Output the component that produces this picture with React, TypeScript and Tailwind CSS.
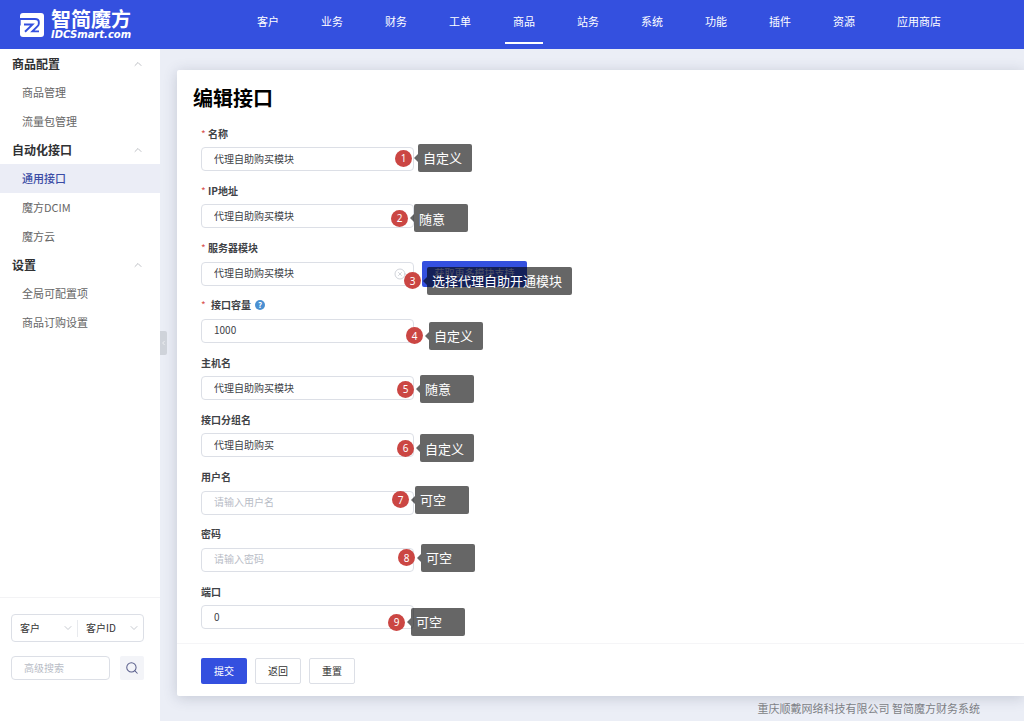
import { ChevronDown, ChevronLeft, ChevronUp, CircleX, Search } from "lucide-react";

const navItems = ["客户", "业务", "财务", "工单", "商品", "站务", "系统", "功能", "插件", "资源", "应用商店"];

const menuGroups = [
  { title: "商品配置", items: ["商品管理", "流量包管理"] },
  { title: "自动化接口", items: ["通用接口", "魔方DCIM", "魔方云"] },
  { title: "设置", items: ["全局可配置项", "商品订购设置"] },
];

type Field = {
  id: string;
  label: string;
  value?: string;
  placeholder?: string;
  type?: string;
  required?: boolean;
  help?: boolean;
  moreModules?: boolean;
  note: string;
  notePosition: string;
};

const fields: Field[] = [
  { id: "name", label: "名称", value: "代理自助购买模块", required: true, note: "自定义", notePosition: "left-[194px] -top-[3px]" },
  { id: "ip", label: "IP地址", value: "代理自助购买模块", required: true, note: "随意", notePosition: "left-[190px] top-0" },
  { id: "module", label: "服务器模块", value: "代理自助购买模块", required: true, moreModules: true, note: "选择代理自助开通模块", notePosition: "left-[203px] top-[5px]" },
  { id: "capacity", label: "接口容量", value: "1000", required: true, help: true, note: "自定义", notePosition: "left-[205px] top-[3px]" },
  { id: "host", label: "主机名", value: "代理自助购买模块", note: "随意", notePosition: "left-[196px] -top-px" },
  { id: "group", label: "接口分组名", value: "代理自助购买", note: "自定义", notePosition: "left-[196px] top-px" },
  { id: "user", label: "用户名", placeholder: "请输入用户名", note: "可空", notePosition: "left-[191px] -top-[5px]" },
  { id: "password", label: "密码", placeholder: "请输入密码", type: "password", note: "可空", notePosition: "left-[197px] -top-1" },
  { id: "port", label: "端口", value: "0", note: "可空", notePosition: "left-[187px] top-[3px]" },
];

function Logo() {
  return (
    <a href="#" className="flex items-center gap-[7px] text-white">
      <svg viewBox="0 0 24 24" className="size-6" aria-hidden="true">
        <rect width="24" height="24" rx="3" fill="currentColor" />
        <path d="M0 6H15Q18.8 6 18.8 9V10.4Q18.8 12 17.6 13.2L12.4 18.4H19" fill="none" stroke="#3450df" strokeWidth="1.9" />
        <path d="M4 11.6H12.4L5 18.8" fill="none" stroke="#3450df" strokeWidth="2" />
        <path d="M0 6V12.4" stroke="#3450df" strokeWidth="1.4" />
      </svg>
      <span className="flex flex-col">
        <span className="text-[20px] leading-5 font-bold">智简魔方</span>
        <span className="font-['DejaVu_Sans',sans-serif] text-[10px] leading-3 font-bold italic">IDCSmart.com</span>
      </span>
    </a>
  );
}

function Header() {
  return (
    <header className="flex h-[49px] shrink-0 bg-[#3450df] pl-5">
      <div className="flex w-[229px] shrink-0 items-center">
        <Logo />
      </div>
      <nav className="flex gap-[26px] text-[11px] text-white">
        {navItems.map((item) => (
          <a
            key={item}
            href="#"
            className={
              item === "商品"
                ? "flex h-11 items-center border-b-2 border-white px-2 whitespace-nowrap"
                : "flex h-11 items-center border-b-2 border-transparent px-2 whitespace-nowrap"
            }
          >
            {item}
          </a>
        ))}
      </nav>
    </header>
  );
}

function Sidebar() {
  return (
    <aside className="relative flex w-40 shrink-0 flex-col bg-white text-[11px]">
      <nav className="pt-px">
        {menuGroups.map((group) => (
          <section key={group.title}>
            <button type="button" className="flex h-7 w-full items-center justify-between pr-4 pl-3 text-[12px] font-bold text-[#303133]">
              {group.title}
              <ChevronUp className="size-3 text-[#a8abb2]" strokeWidth={1.5} />
            </button>
            {group.items.map((item) => (
              <a
                key={item}
                href="#"
                className={
                  item === "通用接口"
                    ? "flex h-[29px] items-center bg-[#ebedf6] pl-[22px] font-medium text-[#3a4ba5]"
                    : "flex h-[29px] items-center pl-[22px] text-[#666666]"
                }
              >
                {item}
              </a>
            ))}
          </section>
        ))}
      </nav>
      <form className="mt-auto flex flex-col gap-3.5 border-t border-[#f3f3f5] pt-4 pr-4 pb-[41px] pl-[11px] text-[10px] text-[#333333]">
        <div className="flex h-7 items-center rounded-sm border border-[#dcdfe6]">
          <div className="relative flex w-[66px] items-center border-r border-[#e8eaee]">
            <select aria-label="搜索类型" className="w-full appearance-none bg-transparent pb-0.5 pl-2 outline-none">
              <option>客户</option>
            </select>
            <ChevronDown className="pointer-events-none absolute right-[3px] size-3 text-[#b4b8c0]" strokeWidth={1.5} />
          </div>
          <div className="relative flex flex-1 items-center">
            <select aria-label="搜索字段" className="w-full appearance-none bg-transparent pb-0.5 pl-2 outline-none">
              <option>客户ID</option>
            </select>
            <ChevronDown className="pointer-events-none absolute right-[3px] size-3 text-[#b4b8c0]" strokeWidth={1.5} />
          </div>
        </div>
        <div className="flex gap-2.5">
          <input
            type="text"
            aria-label="高级搜索"
            placeholder="高级搜索"
            className="h-6 min-w-0 flex-1 rounded-sm border border-[#dcdfe6] px-3 pb-0.5 outline-none placeholder:text-[#b8bcc6]"
          />
          <button type="button" aria-label="搜索" className="flex size-6 items-center justify-center rounded-xs bg-[#f3f4f8] text-[#5a5f8c]">
            <Search className="size-3.5" strokeWidth={1.75} />
          </button>
        </div>
      </form>
      <button
        type="button"
        aria-label="收起菜单"
        className="absolute top-[282px] left-full flex h-6 w-[7px] items-center justify-center rounded-r-xs bg-[#cfd3da] text-white"
      >
        <ChevronLeft className="size-2" strokeWidth={2} />
      </button>
    </aside>
  );
}

function Note({ index, text, position }: { index: number; text: string; position: string }) {
  return (
    <div className={`absolute z-10 flex items-center ${position}`}>
      <span className="flex size-[17px] items-center justify-center rounded-full bg-[#cb4643] font-['Noto_Sans',sans-serif] text-[10px] leading-none text-white">
        {index}
      </span>
      <svg viewBox="0 0 4 8" className="ml-0.5 h-2 w-1" aria-hidden="true">
        <path d="M4 0V8L0 4Z" fill="#000000" fillOpacity="0.6" />
      </svg>
      <span className="flex h-7 min-w-[54px] items-center rounded-xs bg-black/60 pr-2.5 pl-[5px] text-[13px] whitespace-nowrap text-white">
        {text}
      </span>
    </div>
  );
}

function FormField({ field, index }: { field: Field; index: number }) {
  return (
    <div className="flex flex-col gap-[3px]">
      <div className="flex h-5 items-center gap-1 pb-0.5">
        <label htmlFor={field.id} className="flex items-center font-bold text-[#404246]">
          {field.required && <span className="w-[7px] font-normal text-[#d9534f]">*</span>}
          <span className={field.help ? "pl-[3px]" : ""}>{field.label}</span>
        </label>
        {field.help && (
          <span className="flex size-2.5 items-center justify-center rounded-full bg-[#4a90d2] text-[8px] leading-none font-bold text-white">?</span>
        )}
      </div>
      <div className="relative flex gap-2">
        <div className="relative flex w-[213px] items-center">
          <input
            id={field.id}
            type={field.type ?? "text"}
            defaultValue={field.value}
            placeholder={field.placeholder}
            className="h-6 w-full rounded-sm border border-[#dcdfe6] bg-white px-3 pb-0.5 text-[#404247] outline-none placeholder:text-[#b8bcc6]"
          />
          {field.moreModules && (
            <button type="button" aria-label="清除" className="absolute right-2 text-[#c0c4cc]">
              <CircleX className="size-3" strokeWidth={1.5} />
            </button>
          )}
        </div>
        {field.moreModules && (
          <button type="button" className="-my-px flex h-[26px] w-[105px] items-center justify-center rounded-xs bg-[#3450df] pb-0.5 whitespace-nowrap text-white/70">
            获取更多模块支持
          </button>
        )}
        <Note index={index} text={field.note} position={field.notePosition} />
      </div>
    </div>
  );
}

function EditForm() {
  return (
    <form className="flex flex-1 flex-col rounded-l-xs bg-white pt-3.5 text-[10px] shadow-[0_2px_14px_rgba(60,70,95,0.22)]">
      <h1 className="px-4 text-[20px] leading-7 font-bold text-black">编辑接口</h1>
      <div className="flex flex-1 flex-col justify-between px-6 pt-3 pb-3.5">
        {fields.map((field, i) => (
          <FormField key={field.id} field={field} index={i + 1} />
        ))}
      </div>
      <div className="flex gap-2 border-t border-[#f5f5f7] px-6 pt-3.5 pb-3">
        <button type="submit" className="h-[26px] w-[46px] rounded-xs bg-[#3450df] pb-0.5 text-white">提交</button>
        <button type="button" className="h-[26px] w-[46px] rounded-xs border border-[#dcdfe6] pb-0.5 text-[#333333]">返回</button>
        <button type="reset" className="h-[26px] w-[46px] rounded-xs border border-[#dcdfe6] pb-0.5 text-[#333333]">重置</button>
      </div>
    </form>
  );
}

export default function App() {
  return (
    <div className="flex min-h-screen flex-col bg-[#ebeef6] font-['Noto_Sans_CJK_SC',sans-serif]">
      <Header />
      <div className="flex flex-1">
        <Sidebar />
        <main className="flex min-w-0 flex-1 flex-col pt-[21px] pl-[17px]">
          <EditForm />
          <footer className="flex h-[25px] items-center justify-end pr-11 text-[11px] text-[#7d7f85]">
            重庆顺戴网络科技有限公司 智简魔方财务系统
          </footer>
        </main>
      </div>
    </div>
  );
}
